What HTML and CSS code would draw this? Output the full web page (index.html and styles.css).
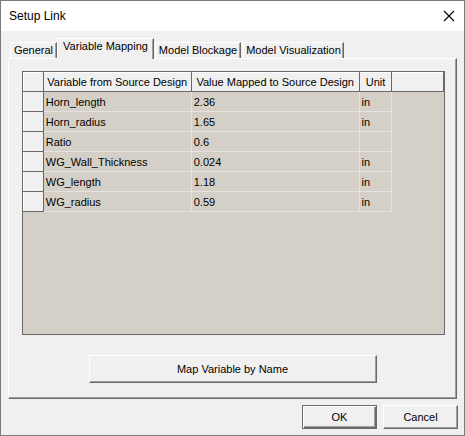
FILE: index.html
```html
<!DOCTYPE html>
<html>
<head>
<meta charset="utf-8">
<title>Setup Link</title>
<link rel="stylesheet" href="styles.css">
</head>
<body>
<div class="window">
  <div class="titlebar">
    <span class="title">Setup Link</span>
    <svg class="close" width="12" height="12" viewBox="0 0 12 12">
      <path d="M1 1 L11 11 M11 1 L1 11" stroke="#000" stroke-width="1.1" fill="none"/>
    </svg>
  </div>
  <div class="client">
    <div class="tabs">
      <div class="tab tab-general">General</div>
      <div class="tab tab-active">Variable Mapping</div>
      <div class="tab tab-blockage">Model Blockage</div>
      <div class="tab tab-vis">Model Visualization</div>
    </div>
    <div class="panel">
      <div class="grid">
        <table>
          <thead>
            <tr>
              <th class="rowhead"></th>
              <th class="c1">Variable from Source Design</th>
              <th class="c2">Value Mapped to Source Design</th>
              <th class="c3">Unit</th>
              <th class="filler"></th>
            </tr>
          </thead>
          <tbody>
            <tr><td class="rowhead"></td><td>Horn_length</td><td>2.36</td><td>in</td></tr>
            <tr><td class="rowhead"></td><td>Horn_radius</td><td>1.65</td><td>in</td></tr>
            <tr><td class="rowhead"></td><td>Ratio</td><td>0.6</td><td></td></tr>
            <tr><td class="rowhead"></td><td>WG_Wall_Thickness</td><td>0.024</td><td>in</td></tr>
            <tr><td class="rowhead"></td><td>WG_length</td><td>1.18</td><td>in</td></tr>
            <tr><td class="rowhead"></td><td>WG_radius</td><td>0.59</td><td>in</td></tr>
          </tbody>
        </table>
      </div>
      <div class="map-row">
        <button class="btn btn-map">Map Variable by Name</button>
      </div>
    </div>
    <div class="footer">
      <button class="btn btn-ok">OK</button>
      <button class="btn btn-cancel">Cancel</button>
    </div>
  </div>
</div>
</body>
</html>
```
FILE: styles.css
```css
* { box-sizing: border-box; }

html, body {
  margin: 0;
  padding: 0;
  background: #f0f0f0;
}

body {
  font-family: "Liberation Sans", Arial, sans-serif;
  font-size: 11px;
  color: #000;
}

.window {
  width: 465px;
  height: 436px;
  border: 1px solid #7a7a7a;
  background: #f0f0f0;
  display: flex;
  flex-direction: column;
}

.titlebar {
  height: 30px;
  background: #fff;
  display: flex;
  align-items: center;
  justify-content: space-between;
  padding: 0 9px 0 8px;
  flex: none;
}

.title {
  font-size: 12px;
  margin-top: -1px;
}

.close {
  display: block;
  margin-top: -1px;
}

.client {
  flex: 1;
  display: flex;
  flex-direction: column;
  padding: 7px 0 0 7px;
}

/* tab strip */
.tabs {
  display: flex;
  align-items: flex-end;
  height: 20px;
  padding-left: 2px;
  position: relative;
  z-index: 1;
}

.tab {
  height: 16px;
  line-height: 14px;
  text-align: center;
  border-top: 1px solid #fff;
  border-left: 1px solid #fff;
  border-right: 1px solid #696969;
  box-shadow: inset -1px 0 0 #a0a0a0;
  background: #f0f0f0;
  white-space: nowrap;
}

.tab-general { width: 47px; }
.tab-blockage { width: 86px; margin-left: 1px; }
.tab-vis { width: 101px; margin-left: 2px; }

.tab-active {
  width: 97px;
  height: 21px;
  line-height: 15px;
  margin-bottom: -1px;
  padding-bottom: 3px;
}

/* page of the tab control */
.panel {
  width: 449px;
  height: 341px;
  border-top: 1px solid #fff;
  border-left: 1px solid #fff;
  border-right: 1px solid #696969;
  border-bottom: 1px solid #696969;
  box-shadow: inset -1px -1px 0 #a0a0a0;
  display: flex;
  flex-direction: column;
  padding: 12px 0 0 13px;
}

/* data grid */
.grid {
  width: 423px;
  height: 264px;
  border: 1px solid #696969;
  background: #d4d0c8;
  overflow: hidden;
}

.grid table {
  border-collapse: collapse;
  border-spacing: 0;
  table-layout: fixed;
}

.grid th {
  height: 19px;
  font-weight: normal;
  text-align: center;
  background: #f0f0f0;
  border-top: 1px solid #fff;
  border-left: 1px solid #fff;
  border-right: 1px solid #696969;
  border-bottom: 1px solid #696969;
  padding: 0;
  white-space: nowrap;
}

.grid th.rowhead { width: 20px; }
.grid th.c1 { width: 148px; }
.grid th.c2 { width: 168px; }
.grid th.c3 { width: 33px; }
.grid th.filler { width: 52px; }

.grid td {
  height: 20px;
  padding: 0 0 0 2px;
  border: 1px solid #e6e3de;
  border-top: none;
  border-left: none;
  background: #d4d0c8;
  white-space: nowrap;
}

.grid td.rowhead {
  background: #f0f0f0;
  border-top: 1px solid #fff;
  border-left: 1px solid #fff;
  border-right: 1px solid #696969;
  border-bottom: 1px solid #696969;
  padding: 0;
}

/* buttons */
.btn {
  font-family: "Liberation Sans", Arial, sans-serif;
  font-size: 11px;
  color: #000;
  background: #f0f0f0;
  border-top: 1px solid #fff;
  border-left: 1px solid #fff;
  border-right: 1px solid #696969;
  border-bottom: 1px solid #696969;
  box-shadow: inset -1px -1px 0 #a0a0a0;
  padding: 0;
  margin: 0;
}

.map-row {
  display: flex;
  justify-content: center;
  margin-top: 20px;
  padding-right: 13px;
}

.btn-map {
  width: 288px;
  height: 28px;
}

.footer {
  display: flex;
  justify-content: flex-end;
  gap: 6px;
  padding: 6px 6px 0 0;
}

.btn-ok, .btn-cancel {
  width: 75px;
  height: 24px;
}

.btn-ok {
  border: 1px solid #696969;
  box-shadow: inset 1px 1px 0 #fff, inset -1px -1px 0 #696969, inset -2px -2px 0 #a0a0a0;
}
```
